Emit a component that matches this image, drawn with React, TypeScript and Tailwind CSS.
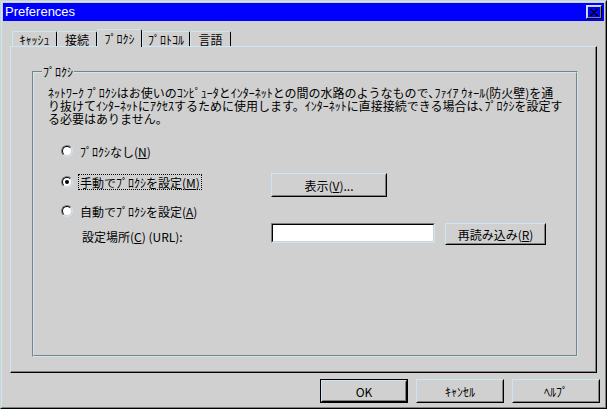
import React from "react";

function Bevel({ className = "", children, isDefault = false }: { className?: string; children: React.ReactNode; isDefault?: boolean }) {
  const body = (
    <div className="h-full w-full border border-t-[#c8e8f4] border-l-[#c8e8f4] border-r-black border-b-black">
      <div className="h-full w-full border border-t-[#d0d0d0] border-l-[#d0d0d0] border-r-[#808080] border-b-[#808080] flex items-center justify-center">
        {children}
      </div>
    </div>
  );
  return <div className={className + (isDefault ? " border border-black" : "")}>{body}</div>;
}

function Radio({ checked = false }: { checked?: boolean }) {
  return (
    <div className="w-[12px] h-[12px] shrink-0 rounded-full border border-t-[#808080] border-l-[#808080] border-r-[#c8e8f4] border-b-[#c8e8f4]">
      <div className="w-full h-full rounded-full border border-t-black border-l-black border-r-[#d0d0d0] border-b-[#d0d0d0] bg-white flex items-center justify-center">
        {checked && <div className="w-[4px] h-[4px] rounded-full bg-black" />}
      </div>
    </div>
  );
}

function U({ children }: { children: React.ReactNode }) {
  return <span className="underline underline-offset-[1px]">{children}</span>;
}

function Tab({ label, active = false, w }: { label: string; active?: boolean; w: string }) {
  if (active) {
    return (
      <div className={w + " relative z-10 h-[18px] mb-[-1px] bg-[#d0d0d0] border-t border-l border-r border-t-[#c8e8f4] border-l-[#c8e8f4] border-r-black rounded-t-[2px] flex items-start justify-center pt-[2px]"}>
        {label}
      </div>
    );
  }
  return (
    <div className={w + " h-[15px] border-t border-l border-r border-t-[#c8e8f4] border-l-[#c8e8f4] border-r-black rounded-t-[2px] flex items-center justify-center"}>
      {label}
    </div>
  );
}

function CloseGlyph() {
  const rects: [number, number, number][] = [
    [0, 0, 2], [6, 0, 2],
    [1, 1, 2], [5, 1, 2],
    [2, 2, 4],
    [3, 3, 2],
    [2, 4, 4],
    [1, 5, 2], [5, 5, 2],
    [0, 6, 2], [6, 6, 2],
  ];
  return (
    <svg width="8" height="7" viewBox="0 0 8 7" shapeRendering="crispEdges">
      {rects.map(([x, y, w], i) => (
        <rect key={i} x={x} y={y} width={w} height={1} fill="#000" />
      ))}
    </svg>
  );
}

export default function App() {
  return (
    <div className="w-[607px] h-[409px] bg-[#d0d0d0] border border-t-[#d0d0d0] border-l-[#d0d0d0] border-r-black border-b-black text-black font-['Noto_Sans_CJK_JP',sans-serif] text-[12px] leading-[13px]">
      <div className="w-full h-full border border-t-[#c8e8f4] border-l-[#c8e8f4] border-r-[#808080] border-b-[#808080] p-[1px] flex flex-col">
        {/* Title bar */}
        <div className="h-[18px] bg-[#0000ff] flex items-center justify-between pl-[2px] pr-[2px]">
          <span className="text-white font-['Liberation_Sans',sans-serif] text-[13px] leading-[16px]">Preferences</span>
          <Bevel className="w-[16px] h-[14px]">
            <CloseGlyph />
          </Bevel>
        </div>

        {/* Tabs */}
        <div className="flex items-end h-[17px] mt-[8px] ml-[9px]">
          <Tab label="ｷｬｯｼｭ" w="w-[45px]" />
          <Tab label="接続" w="w-[40px]" />
          <Tab label="ﾌﾟﾛｸｼ" w="w-[45px]" active />
          <Tab label="ﾌﾟﾛﾄｺﾙ" w="w-[48px]" />
          <Tab label="言語" w="w-[41px]" />
        </div>

        {/* Panel */}
        <div className="ml-[7px] w-[587px] h-[327px] border border-t-[#c8e8f4] border-l-[#c8e8f4] border-r-black border-b-black">
          <div className="w-full h-full border-r border-b border-r-[#808080] border-b-[#808080] pt-[24px] pl-[21px]">
            {/* Group box */}
            <div className="relative w-[546px] h-[286px] border border-t-[#808080] border-l-[#808080] border-r-[#c8e8f4] border-b-[#c8e8f4]">
              <span className="absolute left-[9px] top-[-7px] bg-[#d0d0d0] px-[1px] leading-[13px]">ﾌﾟﾛｸｼ</span>
              <div className="w-full h-full border border-t-[#c8e8f4] border-l-[#c8e8f4] border-r-[#808080] border-b-[#808080] flex flex-col">
                <div className="pt-[13px] pl-[14px] whitespace-nowrap">
                  <div>ﾈｯﾄﾜｰｸ ﾌﾟﾛｸｼはお使いのｺﾝﾋﾟｭｰﾀとｲﾝﾀｰﾈｯﾄとの間の水路のようなもので､ﾌｧｲｱ ｳｫｰﾙ(防火壁)を通</div>
                  <div>り抜けてｲﾝﾀｰﾈｯﾄにｱｸｾｽするために使用します。ｲﾝﾀｰﾈｯﾄに直接接続できる場合は､ﾌﾟﾛｸｼを設定す</div>
                  <div>る必要はありません。</div>
                </div>

                <div className="pl-[27px] flex flex-col">
                  {/* Row 1 */}
                  <div className="mt-[18px] h-[16px] flex items-center">
                    <Radio />
                    <span className="ml-[7px] whitespace-nowrap">ﾌﾟﾛｸｼなし(<U>N</U>)</span>
                  </div>

                  {/* Row 2 */}
                  <div className="mt-[14px] flex items-start">
                    <div className="w-[210px] h-[16px] mt-[1px] flex items-center">
                      <Radio checked />
                      <span className="ml-[5px] px-[1px] h-[16px] flex items-center border border-dotted border-black whitespace-nowrap">
                        手動でﾌﾟﾛｸｼを設定(<U>M</U>)
                      </span>
                    </div>
                    <Bevel className="w-[116px] h-[24px]">
                      <span>表示(<U>V</U>)...</span>
                    </Bevel>
                  </div>

                  {/* Row 3 */}
                  <div className="mt-[6px] h-[16px] flex items-center">
                    <Radio />
                    <span className="ml-[7px] whitespace-nowrap">自動でﾌﾟﾛｸｼを設定(<U>A</U>)</span>
                  </div>

                  {/* Row 4 */}
                  <div className="mt-[4px] flex items-start">
                    <div className="w-[210px] pl-[21px] mt-[7px] whitespace-nowrap">
                      設定場所(<U>C</U>) (URL):
                    </div>
                    <div className="w-[164px] h-[20px] border border-t-[#808080] border-l-[#808080] border-r-[#c8e8f4] border-b-[#c8e8f4]">
                      <div className="w-full h-full bg-white border border-t-black border-l-black border-r-[#d0d0d0] border-b-[#d0d0d0]" />
                    </div>
                    <Bevel className="ml-[10px] w-[101px] h-[22px]">
                      <span>再読み込み(<U>R</U>)</span>
                    </Bevel>
                  </div>
                </div>
              </div>
            </div>
          </div>
        </div>

        {/* Bottom buttons */}
        <div className="mt-[6px] flex justify-end gap-[8px] pr-[4px]">
          <Bevel className="w-[88px] h-[24px]" isDefault>
            <span>OK</span>
          </Bevel>
          <Bevel className="w-[88px] h-[24px]">
            <span>ｷｬﾝｾﾙ</span>
          </Bevel>
          <Bevel className="w-[88px] h-[24px]">
            <span>ﾍﾙﾌﾟ</span>
          </Bevel>
        </div>
      </div>
    </div>
  );
}
